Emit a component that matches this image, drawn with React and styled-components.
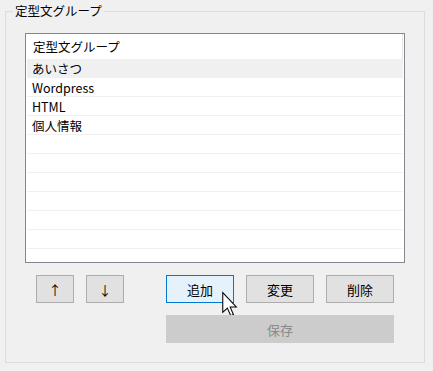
import React from 'react';
import styled, { createGlobalStyle } from 'styled-components';

const font = '"Noto Sans CJK JP", "Noto Sans", sans-serif';

const GlobalStyle = createGlobalStyle`
    html, body {
        margin: 0;
        padding: 0;
        background: #f0f0f0;
        font-family: ${font};
    }
`;

const Window = styled.div`
    width: 433px;
    height: 371px;
    padding: 3px 8px 8px 5px;
    box-sizing: border-box;
    background: #f0f0f0;
`;

const GroupBox = styled.fieldset`
    margin: 0;
    padding: 0;
    height: 360px;
    box-sizing: border-box;
    border: 1px solid #dcdcdc;
    min-width: 0;
`;

const GroupTitle = styled.legend`
    margin-left: 7px;
    padding: 0 2px;
    font-size: 12.5px;
    line-height: 16px;
    color: #000;
`;

const ListBox = styled.div`
    margin: 14px 0 0 19px;
    width: 380px;
    height: 230px;
    box-sizing: border-box;
    border: 1px solid #828790;
    background: #fff;
    overflow: hidden;
`;

const HeaderRow = styled.div`
    height: 25px;
    margin-right: 1px;
    padding-left: 7px;
    display: flex;
    align-items: center;
    font-size: 12.5px;
    color: #000;
    border-right: 1px solid #e5e5e5;
`;

const Row = styled.div`
    height: 19px;
    box-sizing: border-box;
    margin: 0 1px;
    padding-left: 5px;
    display: flex;
    align-items: center;
    font-size: 12.5px;
    color: #000;
    border-bottom: 1px solid #f0f0f0;
    background: ${p => (p.$selected ? '#f0f0f0' : '#fff')};
`;

const Buttons = styled.div`
    margin: 12px 0 0 30px;
    display: grid;
    grid-template-columns: 38px 38px 18px 68px 68px 68px;
    grid-auto-rows: 28px;
    column-gap: 12px;
    row-gap: 12px;
`;

const Button = styled.button`
    position: relative;
    margin: 0;
    padding: 0;
    box-sizing: border-box;
    grid-column: ${p => p.$col};
    font-family: ${font};
    font-size: 13px;
    color: ${p => (p.disabled ? '#8a8a8a' : '#000')};
    background: ${p => (p.$hover ? '#e5f1fb' : p.disabled ? '#cccccc' : '#e1e1e1')};
    border: 1px solid ${p => (p.$hover ? '#0078d7' : p.disabled ? '#cccccc' : '#adadad')};
    border-radius: 0;
`;

const Cursor = styled.svg`
    position: absolute;
    left: 55px;
    top: 16px;
    width: 16px;
    height: 25px;
    overflow: visible;
`;

const items = ['あいさつ', 'Wordpress', 'HTML', '個人情報'];

export default function App() {
    const rows = [...items, ...Array(7).fill('')];
    return (
        <Window>
            <GlobalStyle />
            <GroupBox>
                <GroupTitle>定型文グループ</GroupTitle>
                <ListBox>
                    <HeaderRow>定型文グループ</HeaderRow>
                    {rows.map((r, i) => (
                        <Row key={i} $selected={i === 0}>{r}</Row>
                    ))}
                </ListBox>
                <Buttons>
                    <Button $col="1">↑</Button>
                    <Button $col="2">↓</Button>
                    <Button $col="4" $hover>
                        追加
                        <Cursor viewBox="0 0 12 19">
                            <path
                                d="M0.5 0.5 L0.5 15.5 L4 12.2 L6.6 18 L8.6 17.1 L6.1 11.4 L10.8 11.4 Z"
                                fill="#fff"
                                stroke="#000"
                                strokeWidth="0.8"
                                strokeLinejoin="miter"
                            />
                        </Cursor>
                    </Button>
                    <Button $col="5">変更</Button>
                    <Button $col="6">削除</Button>
                    <Button $col="4 / 7" disabled>保存</Button>
                </Buttons>
            </GroupBox>
        </Window>
    );
}
